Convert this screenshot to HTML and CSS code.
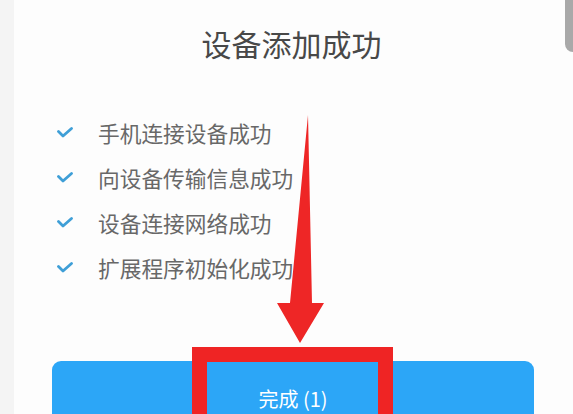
FILE: index.html
```html
<!DOCTYPE html>
<html lang="zh-CN">

<head>
    <meta charset="UTF-8">
    <meta name="viewport" content="width=device-width, initial-scale=1.0">
    <title>设备添加成功</title>
    <link rel="stylesheet" href="styles.css">
</head>

<body>

    <div class="card">
        <h1 class="title">设备添加成功</h1>

        <ul class="steps">
            <li><span class="tick"><svg width="16" height="11" viewBox="0 0 16 11"><path d="M1.5 4.5 L6 9 L14.5 1.5" /></svg></span>手机连接设备成功</li>
            <li><span class="tick"><svg width="16" height="11" viewBox="0 0 16 11"><path d="M1.5 4.5 L6 9 L14.5 1.5" /></svg></span>向设备传输信息成功</li>
            <li><span class="tick"><svg width="16" height="11" viewBox="0 0 16 11"><path d="M1.5 4.5 L6 9 L14.5 1.5" /></svg></span>设备连接网络成功</li>
            <li><span class="tick"><svg width="16" height="11" viewBox="0 0 16 11"><path d="M1.5 4.5 L6 9 L14.5 1.5" /></svg></span>扩展程序初始化成功</li>
        </ul>

        <button class="done">完成 (1)</button>
    </div>

    <div class="scroll-tab"></div>

    <!-- red annotation drawn over the screen -->
    <svg class="arrow" width="60" height="240" viewBox="0 0 60 240">
        <polygon points="35,0 39,188 51,188 27,228 4,188 17,188" />
    </svg>
    <div class="highlight"></div>

</body>

</html>
```

FILE: styles.css
```css
* {
    margin: 0;
    padding: 0;
    box-sizing: border-box;
}

body {
    width: 573px;
    height: 414px;
    overflow: hidden;
    background: #f4f4f4;
    font-family: "Noto Sans CJK SC", "Noto Sans", sans-serif;
    position: relative;
}

.card {
    margin-left: 14px;
    height: 414px;
    background: #fdfdfd;
    padding-top: 23px;
}

.title {
    text-align: center;
    font-size: 30px;
    line-height: 40px;
    font-weight: normal;
    color: #484848;
    padding-right: 4px;
}

.steps {
    list-style: none;
    margin-top: 47px;
    padding-left: 43px;
}

.steps li {
    display: flex;
    align-items: center;
    height: 45px;
    font-size: 21.7px;
    color: #686868;
}

.tick {
    display: flex;
    width: 41px;
}

.tick path {
    fill: none;
    stroke: #3f9fd7;
    stroke-width: 2.8;
    stroke-linecap: round;
    stroke-linejoin: round;
}

.done {
    display: block;
    margin: 71px 39px 0 38px;
    width: 482px;
    height: 53px;
    padding-top: 22px;
    line-height: 24px;
    border: none;
    border-radius: 9px 9px 0 0;
    background: #2ca6f7;
    color: #ffffff;
    font-family: inherit;
    font-size: 20px;
}

.scroll-tab {
    position: absolute;
    top: 0;
    right: 0;
    width: 8px;
    height: 52px;
    background: #a9a9a9;
    border-bottom-left-radius: 8px;
}

.arrow {
    position: absolute;
    left: 273px;
    top: 115px;
}

.arrow polygon {
    fill: #ee2626;
}

.highlight {
    position: absolute;
    left: 192px;
    top: 347px;
    width: 201px;
    height: 67px;
    border: 15px solid #ef2424;
    border-bottom: none;
}
```
